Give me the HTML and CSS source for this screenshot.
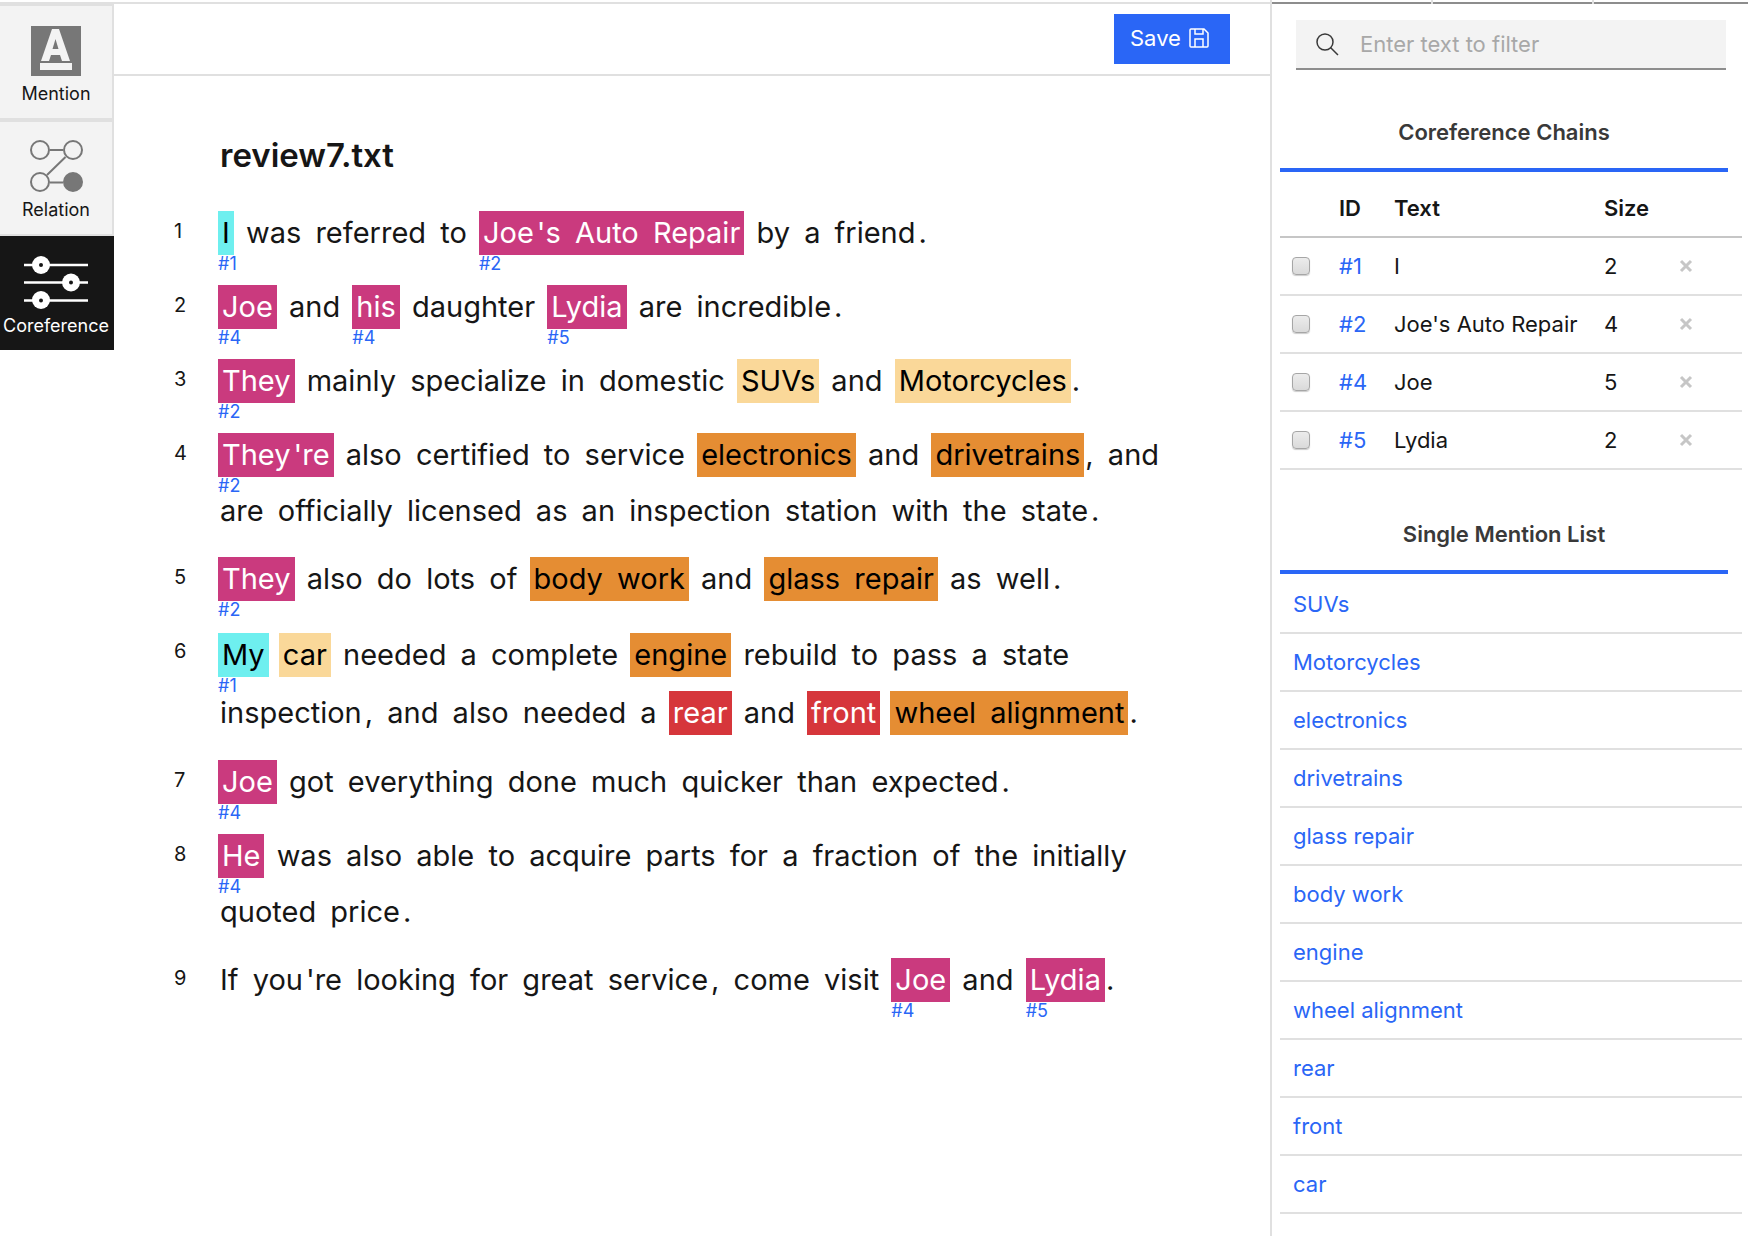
FILE: index.html
```html
<!DOCTYPE html>
<html lang="en">
<head>
<meta charset="utf-8">
<title>review7.txt - Coreference</title>
<link rel="stylesheet" href="styles.css">
</head>
<body>
<div class="app">
  <nav class="tools" aria-label="Annotation modes">
    <button class="tool" type="button">
      <svg class="tool-icon" width="52" height="52" viewBox="0 0 52 52" aria-hidden="true">
        <path fill="#777" d="M1 0h50v50H1z"/>
        <path fill="#f3f3f3" fill-rule="evenodd" d="M22 3h7l11 32h-8l-2-6h-9l-2 6h-8zM25.500 13l-3 10h6zM10 37h32v7H10z"/>
      </svg>
      Mention
    </button>
    <button class="tool" type="button">
      <svg class="tool-icon" width="52" height="52" viewBox="0 2 52 52" fill="none" stroke="#777" stroke-width="2" aria-hidden="true">
        <path d="M20 10h13M20 42.500h13M17 35l18.500-18"/>
        <circle cx="10" cy="10" r="9"/><circle cx="43" cy="10" r="9"/>
        <circle cx="10" cy="42" r="9"/><circle cx="43" cy="42" r="9" fill="#777"/>
      </svg>
      Relation
    </button>
    <button class="tool tool-active" type="button" aria-pressed="true">
      <svg class="tool-icon" width="64" height="52" viewBox="0 0 64 52" aria-hidden="true">
        <path stroke="#fff" stroke-width="2.500" d="M0 9h64M0 26.500h64M0 44.500h64"/>
        <g fill="#fff"><circle cx="17" cy="9" r="9"/><circle cx="47" cy="26.500" r="9"/><circle cx="17" cy="44" r="9"/></g>
        <g fill="#161616"><circle cx="17" cy="9" r="2"/><circle cx="47" cy="26.500" r="2"/><circle cx="17" cy="44.500" r="2"/></g>
      </svg>
      Coreference
    </button>
  </nav>

  <main class="document">
    <header class="toolbar">
      <button class="save" type="button">Save
        <svg width="20" height="20" viewBox="0 0 20 20" fill="none" stroke="#fff" stroke-width="1.500" aria-hidden="true">
          <path d="M1 2q0-1 1-1h13l4 4v13q0 1-1 1H2q-1 0-1-1zM6 1v5h8V1M6 19v-8h8v8"/>
        </svg>
      </button>
    </header>
    <article class="text">
      <h1>review7.txt</h1>
      <ol class="sentences">
        <li><p><mark class="mention self"><span>I</span><a href="#c1">#1</a></mark> <span>was</span> <span>referred</span> <span>to</span> <mark class="mention entity"><span>Joe</span><span class="suffix">'s</span> <span>Auto</span> <span>Repair</span><a href="#c2">#2</a></mark> <span>by</span> <span>a</span> <span>friend</span><span class="suffix">.</span></p></li>
        <li><p><mark class="mention entity"><span>Joe</span><a href="#c4">#4</a></mark> <span>and</span> <mark class="mention entity"><span>his</span><a href="#c4">#4</a></mark> <span>daughter</span> <mark class="mention entity"><span>Lydia</span><a href="#c5">#5</a></mark> <span>are</span> <span>incredible</span><span class="suffix">.</span></p></li>
        <li><p><mark class="mention entity"><span>They</span><a href="#c2">#2</a></mark> <span>mainly</span> <span>specialize</span> <span>in</span> <span>domestic</span> <mark class="mention vehicle"><span>SUVs</span></mark> <span>and</span> <mark class="mention vehicle"><span>Motorcycles</span></mark><span class="suffix">.</span></p></li>
        <li><p><mark class="mention entity"><span>They</span><span class="suffix">'re</span><a href="#c2">#2</a></mark> <span>also</span> <span>certified</span> <span>to</span> <span>service</span> <mark class="mention part"><span>electronics</span></mark> <span>and</span> <mark class="mention part"><span>drivetrains</span></mark><span class="suffix">,</span> <span>and</span> <span>are</span> <span>officially</span> <span>licensed</span> <span>as</span> <span>an</span> <span>inspection</span> <span>station</span> <span>with</span> <span>the</span> <span>state</span><span class="suffix">.</span></p></li>
        <li><p><mark class="mention entity"><span>They</span><a href="#c2">#2</a></mark> <span>also</span> <span>do</span> <span>lots</span> <span>of</span> <mark class="mention part"><span>body</span> <span>work</span></mark> <span>and</span> <mark class="mention part"><span>glass</span> <span>repair</span></mark> <span>as</span> <span>well</span><span class="suffix">.</span></p></li>
        <li class="dense"><p><mark class="mention self"><span>My</span><a href="#c1">#1</a></mark> <mark class="mention vehicle"><span>car</span></mark> <span>needed</span> <span>a</span> <span>complete</span> <mark class="mention part"><span>engine</span></mark> <span>rebuild</span> <span>to</span> <span>pass</span> <span>a</span> <span>state</span> <span>inspection</span><span class="suffix">,</span> <span>and</span> <span>also</span> <span>needed</span> <span>a</span> <mark class="mention position"><span>rear</span></mark> <span>and</span> <mark class="mention position"><span>front</span></mark> <mark class="mention part"><span>wheel</span> <span>alignment</span></mark><span class="suffix">.</span></p></li>
        <li><p><mark class="mention entity"><span>Joe</span><a href="#c4">#4</a></mark> <span>got</span> <span>everything</span> <span>done</span> <span>much</span> <span>quicker</span> <span>than</span> <span>expected</span><span class="suffix">.</span></p></li>
        <li><p><mark class="mention entity"><span>He</span><a href="#c4">#4</a></mark> <span>was</span> <span>also</span> <span>able</span> <span>to</span> <span>acquire</span> <span>parts</span> <span>for</span> <span>a</span> <span>fraction</span> <span>of</span> <span>the</span> <span>initially</span> <span>quoted</span> <span>price</span><span class="suffix">.</span></p></li>
        <li><p><span>If</span> <span>you</span><span class="suffix">'re</span> <span>looking</span> <span>for</span> <span>great</span> <span>service</span><span class="suffix">,</span> <span>come</span> <span>visit</span> <mark class="mention entity"><span>Joe</span><a href="#c4">#4</a></mark> <span>and</span> <mark class="mention entity"><span>Lydia</span><a href="#c5">#5</a></mark><span class="suffix">.</span></p></li>
      </ol>
    </article>
  </main>

  <aside class="panel">
    <div class="tabs" aria-hidden="true"><i></i><i></i></div>
    <label class="filter">
      <svg width="24" height="24" viewBox="0 0 24 24" fill="none" stroke="#393939" stroke-width="1.500" aria-hidden="true"><circle cx="9" cy="10" r="8"/><path d="M14.500 15.500L22 23"/></svg>
      <input type="text" placeholder="Enter text to filter" aria-label="Filter">
    </label>

    <h2>Coreference Chains</h2>
    <table class="chains">
      <colgroup><col class="col-check"><col class="col-id"><col class="col-text"><col class="col-size"><col></colgroup>
      <thead><tr><th></th><th>ID</th><th>Text</th><th>Size</th><th></th></tr></thead>
      <tbody>
        <tr id="c1"><td><input type="checkbox" aria-label="Select #1"></td><td><a href="#c1">#1</a></td><td>I</td><td>2</td><td><button class="remove" type="button" aria-label="Remove #1"><svg width="14" height="14" viewBox="0 0 14 14"><path d="M2 2l10 10M12 2L2 12"/></svg></button></td></tr>
        <tr id="c2"><td><input type="checkbox" aria-label="Select #2"></td><td><a href="#c2">#2</a></td><td>Joe's Auto Repair</td><td>4</td><td><button class="remove" type="button" aria-label="Remove #2"><svg width="14" height="14" viewBox="0 0 14 14"><path d="M2 2l10 10M12 2L2 12"/></svg></button></td></tr>
        <tr id="c4"><td><input type="checkbox" aria-label="Select #4"></td><td><a href="#c4">#4</a></td><td>Joe</td><td>5</td><td><button class="remove" type="button" aria-label="Remove #4"><svg width="14" height="14" viewBox="0 0 14 14"><path d="M2 2l10 10M12 2L2 12"/></svg></button></td></tr>
        <tr id="c5"><td><input type="checkbox" aria-label="Select #5"></td><td><a href="#c5">#5</a></td><td>Lydia</td><td>2</td><td><button class="remove" type="button" aria-label="Remove #5"><svg width="14" height="14" viewBox="0 0 14 14"><path d="M2 2l10 10M12 2L2 12"/></svg></button></td></tr>
      </tbody>
    </table>

    <h2>Single Mention List</h2>
    <ul class="singles">
      <li><a href="#">SUVs</a></li>
      <li><a href="#">Motorcycles</a></li>
      <li><a href="#">electronics</a></li>
      <li><a href="#">drivetrains</a></li>
      <li><a href="#">glass repair</a></li>
      <li><a href="#">body work</a></li>
      <li><a href="#">engine</a></li>
      <li><a href="#">wheel alignment</a></li>
      <li><a href="#">rear</a></li>
      <li><a href="#">front</a></li>
      <li><a href="#">car</a></li>
    </ul>
  </aside>
</div>
</body>
</html>
```
FILE: styles.css
```css
* { box-sizing: border-box; }

body {
  margin: 0;
  background: #fff;
  color: #161616;
  font: 22px/28px Inter, "Noto Sans", sans-serif;
}

button, input { font: inherit; color: inherit; }
button { border: 0; padding: 0; background: none; cursor: pointer; }
a { color: #2a66f6; text-decoration: none; }
h1, h2, p, ol, ul { margin: 0; padding: 0; }
ol, ul { list-style: none; }

.app {
  display: grid;
  grid-template-columns: 114px minmax(0, 1fr) 478px;
  min-height: 100vh;
}

/* Mode switcher */
.tools {
  margin-top: 2px;
  border-top: 2px solid #e0e0e0;
}

.tool {
  display: flex;
  flex-direction: column;
  align-items: center;
  gap: 5px;
  width: 100%;
  height: 116px;
  padding-top: 20px;
  border: 2px solid #e0e0e0;
  border-left: 0;
  background: #f3f3f3;
  font-size: 18px;
  line-height: 22px;
}

.tool-icon { display: block; flex: none; overflow: visible; }

.tool-active {
  gap: 7px;
  height: 114px;
  padding-top: 18px;
  border-color: #161616;
  border-bottom: 0;
  background: #161616;
  color: #fff;
}

/* Document */
.document {
  margin-top: 2px;
  border-top: 2px solid #e0e0e0;
}

.toolbar {
  display: flex;
  justify-content: flex-end;
  padding: 10px 40px;
  border-bottom: 2px solid #e0e0e0;
}

.save {
  display: flex;
  align-items: center;
  gap: 8px;
  width: 116px;
  height: 50px;
  padding: 0 0 2px 16px;
  background: #2a66f6;
  color: #fff;
}

.text { padding: 57px 80px 80px 60px; }

.text h1 {
  padding-left: 46px;
  font-size: 33px;
  line-height: 44px;
  font-weight: 600;
}

.sentences {
  margin-top: 31px;
  counter-reset: sentence;
}

.sentences li {
  display: grid;
  grid-template-columns: 43px minmax(0, 1fr);
  padding-bottom: 18px;
  counter-increment: sentence;
}

.sentences li::before {
  content: counter(sentence);
  font-size: 20px;
  line-height: 46px;
}

.sentences p { font-size: 29px; line-height: 50px; }
.sentences .dense p { line-height: 53px; }
.sentences span { padding: 0 3px; }
.sentences .suffix { padding-left: 0; }

.mention {
  display: inline-block;
  position: relative;
  margin: 0 1px;
  padding: 0 1px;
  line-height: 44px;
  white-space: nowrap;
  color: #000;
}

.mention:has(a) { margin-bottom: 9px; }

.mention a {
  position: absolute;
  top: 100%;
  left: 0;
  font-size: 18px;
  line-height: 18px;
}

.self { background: #6eefef; }
.entity { background: #ca3a7e; color: #fff; }
.vehicle { background: #fad899; }
.part { background: #e58d33; }
.position { background: #d6363b; color: #fff; }

/* Side panel */
.panel {
  padding-bottom: 20px;
  border-left: 2px solid #e0e0e0;
}

.tabs {
  display: flex;
  height: 4px;
  border-bottom: 2px solid #8d8d8d;
}

.tabs i { width: 161px; height: 4px; border-right: 2px solid #e0e0e0; }

.filter {
  display: flex;
  align-items: center;
  gap: 20px;
  height: 50px;
  margin: 16px 22px 26px 24px;
  padding: 0 20px;
  border-bottom: 2px solid #8d8d8d;
  background: #f3f3f3;
}

.filter input {
  flex: 1;
  min-width: 0;
  padding: 0;
  border: 0;
  outline: 0;
  background: none;
}

.filter input::placeholder { color: #a8a8a8; opacity: 1; }

.panel h2 {
  margin: 0 20px 0 8px;
  border-bottom: 4px solid #2a66f6;
  color: #393939;
  font-size: 22px;
  line-height: 72px;
  font-weight: 600;
  text-align: center;
}

.chains {
  width: calc(100% - 14px);
  margin: 8px 6px 28px 8px;
  border-collapse: separate;
  border-spacing: 0;
  table-layout: fixed;
}

.col-check { width: 59px; }
.col-id { width: 55px; }
.col-text { width: 210px; }
.col-size { width: 74px; }

.chains th, .chains td {
  height: 58px;
  padding: 0;
  border-bottom: 2px solid #e0e0e0;
  text-align: left;
  vertical-align: middle;
}

.chains th { border-color: #c6c6c6; font-weight: 600; }

.chains input {
  display: block;
  appearance: none;
  width: 18px;
  height: 18px;
  margin: 0 0 0 12px;
  border: 1px solid #a6a6a6;
  border-radius: 4px;
  background: linear-gradient(#ececec, #dadada);
  box-shadow: 0 1px 1px #ccc;
}

.remove { display: block; padding: 0 1px; }
.remove svg { display: block; stroke: #c6c6c6; stroke-width: 3; }

.singles { margin: 0 6px 0 8px; padding-top: 2px; }

.singles li {
  padding: 14px 13px;
  border-bottom: 2px solid #e0e0e0;
}
```
